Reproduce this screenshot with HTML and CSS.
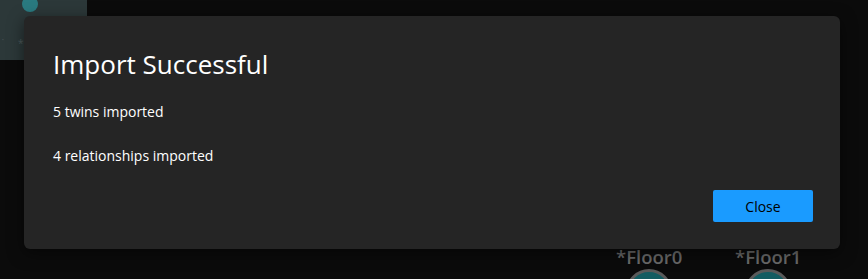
FILE: index.html
```html
<!DOCTYPE html>
<html lang="en">
<head>
    <meta charset="UTF-8">
    <title>Import Successful</title>
    <link rel="stylesheet" href="styles.css">
</head>
<body>
    <div class="canvas">
        <!-- dimmed panel behind the overlay -->
        <div class="side-panel">
            <span class="panel-dot"></span>
            <span class="panel-mark mark-a">&#729;</span>
            <span class="panel-mark mark-b">*</span>
        </div>

        <!-- graph nodes -->
        <div class="node node-a">
            <span class="node-label">*Floor0</span>
            <span class="node-circle"></span>
        </div>
        <div class="node node-b">
            <span class="node-label">*Floor1</span>
            <span class="node-circle"></span>
        </div>
    </div>

    <div class="overlay">
        <div class="dialog">
            <h2 class="dialog-title">Import Successful</h2>
            <p class="dialog-text">5 twins imported</p>
            <p class="dialog-text">4 relationships imported</p>
            <div class="dialog-footer">
                <button class="btn-primary">Close</button>
            </div>
        </div>
    </div>
</body>
</html>
```

FILE: styles.css
```css
html {
    overflow: hidden;
}

body {
    margin: 0;
    width: 868px;
    height: 279px;
    overflow: hidden;
    background: #0b0b0b;
    font-family: "Open Sans", "Noto Sans", sans-serif;
    position: relative;
}

.canvas {
    position: absolute;
    inset: 0;
    overflow: hidden;
    background: #0b0b0b;
}

.side-panel {
    position: absolute;
    left: 0;
    top: 0;
    width: 87px;
    height: 60px;
    background: #2c3839;
}

.panel-dot {
    position: absolute;
    left: 22px;
    top: -4px;
    width: 16px;
    height: 16px;
    border-radius: 50%;
    background: #2a7a80;
}

.panel-mark {
    position: absolute;
    top: 36px;
    font-size: 10px;
    color: #4c5859;
}

.mark-a { left: 2px; }
.mark-b { left: 18px; }

.node {
    position: absolute;
    top: 245px;
    display: flex;
    flex-direction: column;
    align-items: center;
}

.node-a { left: 616px; }
.node-b { left: 735px; }

.node-label {
    font-family: "Open Sans", sans-serif;
    font-weight: 600;
    font-size: 18.5px;
    line-height: 24px;
    color: #6a6a6a;
}

.node-circle {
    width: 40px;
    height: 40px;
    border-radius: 50%;
    background: #135c61;
    border: 3px solid #5a5a5a;
}

.overlay {
    position: absolute;
    inset: 0;
    padding: 16px 28px 30px 24px;
}

.dialog {
    background: #252525;
    border-radius: 6px;
    height: 233px;
    box-sizing: border-box;
    padding: 30px 27px 0 29px;
    color: #ffffff;
    display: flex;
    flex-direction: column;
    box-shadow: 0 4px 16px rgba(0, 0, 0, 0.5);
}

.dialog-title {
    margin: 0 0 20px;
    font-weight: 400;
    font-size: 26px;
    line-height: 36px;
}

.dialog-text {
    margin: 0 0 24px;
    font-size: 14px;
    line-height: 20px;
}

.dialog-footer {
    display: flex;
    justify-content: flex-end;
    margin-top: auto;
    padding-bottom: 27px;
}

.btn-primary {
    width: 100px;
    height: 32px;
    border: none;
    border-radius: 2px;
    background: #1a9bff;
    color: #000;
    font-family: "Open Sans", sans-serif;
    font-size: 14px;
}
```
